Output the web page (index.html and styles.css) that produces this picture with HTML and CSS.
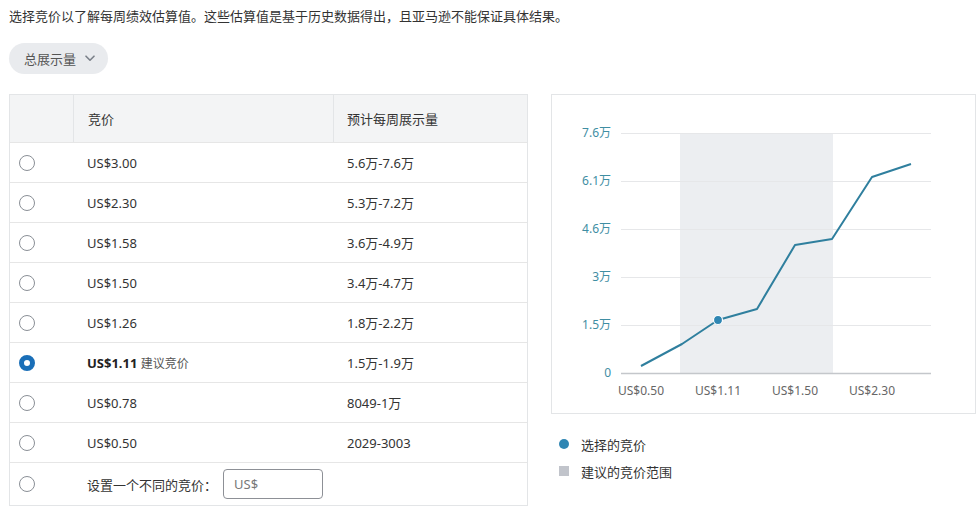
FILE: index.html
```html
<!DOCTYPE html>
<html lang="zh">
<head>
<meta charset="utf-8">
<title>竞价</title>
<link rel="stylesheet" href="styles.css">
</head>
<body>
<div class="page">
  <p class="intro">选择竞价以了解每周绩效估算值。这些估算值是基于历史数据得出，且亚马逊不能保证具体结果。</p>
  <button class="filter">总展示量
    <svg class="chev" width="10" height="7" viewBox="0 0 10 7"><path d="M1 1.2 L5 5.2 L9 1.2" fill="none" stroke="#7a8089" stroke-width="1.6" stroke-linecap="round" stroke-linejoin="round"/></svg>
  </button>
  <div class="main">
    <div class="table">
      <div class="row head">
        <div class="cell c1"></div>
        <div class="cell c2">竞价</div>
        <div class="cell c3">预计每周展示量</div>
      </div>
      <div class="row"><div class="cell c1"><span class="radio"></span></div><div class="cell c2">US$3.00</div><div class="cell c3">5.6万-7.6万</div></div>
      <div class="row"><div class="cell c1"><span class="radio"></span></div><div class="cell c2">US$2.30</div><div class="cell c3">5.3万-7.2万</div></div>
      <div class="row"><div class="cell c1"><span class="radio"></span></div><div class="cell c2">US$1.58</div><div class="cell c3">3.6万-4.9万</div></div>
      <div class="row"><div class="cell c1"><span class="radio"></span></div><div class="cell c2">US$1.50</div><div class="cell c3">3.4万-4.7万</div></div>
      <div class="row"><div class="cell c1"><span class="radio"></span></div><div class="cell c2">US$1.26</div><div class="cell c3">1.8万-2.2万</div></div>
      <div class="row"><div class="cell c1"><span class="radio checked"></span></div><div class="cell c2"><b>US$1.11</b>&nbsp;<span class="hint">建议竞价</span></div><div class="cell c3">1.5万-1.9万</div></div>
      <div class="row"><div class="cell c1"><span class="radio"></span></div><div class="cell c2">US$0.78</div><div class="cell c3">8049-1万</div></div>
      <div class="row"><div class="cell c1"><span class="radio"></span></div><div class="cell c2">US$0.50</div><div class="cell c3">2029-3003</div></div>
      <div class="row last"><div class="cell c1"><span class="radio"></span></div><div class="cell c2 custom">设置一个不同的竞价：<span class="input">US$</span></div><div class="cell c3"></div></div>
    </div>
    <div class="side">
      <div class="chart">
        <svg width="423" height="318" viewBox="0 0 423 318">
          <rect x="128" y="38" width="153" height="240" fill="#eceef1"/>
          <g stroke="#e6e7e9" stroke-width="1">
            <line x1="69" y1="38.5" x2="379" y2="38.5"/>
            <line x1="69" y1="86.5" x2="379" y2="86.5"/>
            <line x1="69" y1="134.5" x2="379" y2="134.5"/>
            <line x1="69" y1="182.5" x2="379" y2="182.5"/>
            <line x1="69" y1="230.5" x2="379" y2="230.5"/>
          </g>
          <line x1="69" y1="278.5" x2="379" y2="278.5" stroke="#c4c7cb" stroke-width="1.5"/>
          <g class="ylab" text-anchor="end">
            <text x="59" y="42">7.6万</text>
            <text x="59" y="90">6.1万</text>
            <text x="59" y="138">4.6万</text>
            <text x="59" y="186">3万</text>
            <text x="59" y="234">1.5万</text>
            <text x="59" y="282">0</text>
          </g>
          <g class="xlab" text-anchor="middle">
            <text x="89" y="300">US$0.50</text>
            <text x="166" y="300">US$1.11</text>
            <text x="243" y="300">US$1.50</text>
            <text x="320" y="300">US$2.30</text>
          </g>
          <polyline points="89,271 130,249 166,225 205,214 243,150 280,144 320,82 359,69" fill="none" stroke="#2f7f9e" stroke-width="2" stroke-linejoin="round"/>
          <circle cx="166" cy="225" r="4.5" fill="#2f86b3" stroke="#fff" stroke-width="1.2"/>
        </svg>
      </div>
      <ul class="legend">
        <li><span class="dot"></span>选择的竞价</li>
        <li><span class="sq"></span>建议的竞价范围</li>
      </ul>
    </div>
  </div>
</div>
</body>
</html>
```
FILE: styles.css
```css
* { box-sizing: border-box; }
html, body { margin: 0; padding: 0; background: #fff; }
body {
  font-family: "Noto Sans", "Noto Sans CJK SC", sans-serif;
  font-size: 13px;
  color: #333;
}
.page { padding: 6px 0 0 9px; }
.intro { margin: 0; line-height: 20px; height: 20px; }
.filter {
  margin-top: 17px;
  width: 99px;
  height: 31px;
  border: none;
  border-radius: 16px;
  background: #e9ebee;
  color: #555;
  font: inherit;
  font-size: 13px;
  display: flex;
  align-items: center;
  padding: 0 0 0 15px;
  gap: 9px;
}
.chev { display: block; }
.main { margin-top: 20px; display: flex; gap: 23px; align-items: flex-start; }
.table { width: 519px; flex-shrink: 0; border: 1px solid #e3e5e7; }
.row {
  display: grid;
  grid-template-columns: 63px 260px 1fr;
  height: 40px;
  border-top: 1px solid #e6e6e6;
  align-items: stretch;
}
.row.head { height: 47px; border-top: none; background: #f3f4f5; }
.row.head .c2, .row.head .c3 { border-left: 1px solid #e3e5e7; }
.row.head .c3 { padding-left: 13px; }
.row.last { height: 43px; }
.cell { display: flex; align-items: center; }
.c1 { padding-left: 9px; }
.c2 { padding-left: 14px; }
.c3 { padding-left: 14px; }
.radio {
  width: 16px; height: 16px;
  border: 1px solid #8a8f96;
  border-radius: 50%;
  display: block;
  background: #fff;
}
.radio.checked {
  border: 5px solid #1a6fb8;
  background: #fff;
}
b { font-weight: 700; color: #222; }
.hint { color: #555; font-size: 12px; }
.custom { gap: 6px; }
.input {
  display: flex;
  align-items: center;
  width: 100px;
  height: 30px;
  border: 1px solid #8d9096;
  border-radius: 4px;
  padding-left: 10px;
  color: #777;
}
.side { width: 425px; flex-shrink: 0; }
.chart { border: 1px solid #e3e5e7; height: 320px; }
.chart svg { display: block; }
.ylab text { fill: #3f8ea3; font-size: 12px; font-family: "Noto Sans", "Noto Sans CJK SC", sans-serif; }
.xlab text { fill: #666; font-size: 12px; font-family: "Noto Sans", "Noto Sans CJK SC", sans-serif; }
.legend { list-style: none; margin: 20px 0 0 0; padding: 0 0 0 8px; }
.legend li { display: flex; align-items: center; height: 20px; gap: 12px; margin-bottom: 7px; color: #333; }
.dot { width: 10px; height: 10px; border-radius: 50%; background: #2f86b3; display: block; }
.sq { width: 10px; height: 10px; background: #c1c4cb; display: block; }
```
